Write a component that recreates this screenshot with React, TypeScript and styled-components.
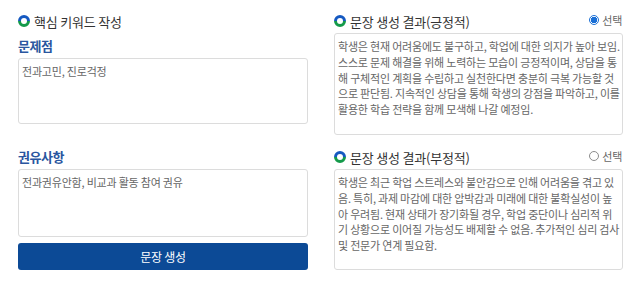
import React from 'react';
import styled, { createGlobalStyle } from 'styled-components';

const GlobalStyle = createGlobalStyle`
  body {
    margin: 0;
    background: #ffffff;
    font-family: "Noto Sans CJK KR", "Noto Sans", sans-serif;
  }
`;

const Page = styled.div`
  display: grid;
  grid-template-columns: 290px 289px;
  grid-template-rows: 126px 125px;
  column-gap: 26px;
  row-gap: 10px;
  padding: 9px 17px 0 18px;
  width: 640px;
  box-sizing: border-box;
`;

const Cell = styled.section`
  display: flex;
  flex-direction: column;
  min-height: 0;
`;

const Header = styled.div`
  display: flex;
  align-items: center;
  justify-content: space-between;
  height: 24px;
  flex: none;
`;

const TitleWrap = styled.div`
  display: flex;
  align-items: center;
  gap: 4px;
`;

const Title = styled.h2`
  margin: 0;
  font-size: 13px;
  font-weight: 400;
  letter-spacing: -0.2px;
  color: #333333;
`;

const Label = styled.h3<{ $h: number }>`
  margin: 0;
  height: ${({ $h }) => $h}px;
  line-height: ${({ $h }) => $h}px;
  font-size: 13px;
  font-weight: 700;
  letter-spacing: -0.5px;
  color: #2a569f;
  flex: none;
`;

const Box = styled.textarea<{ $h?: number }>`
  display: block;
  box-sizing: border-box;
  width: 100%;
  height: ${({ $h }) => ($h ? `${$h}px` : 'auto')};
  flex: ${({ $h }) => ($h ? 'none' : '1')};
  margin: 0;
  padding: 5px 1px 5px 3px;
  border: 1px solid #dcdcdc;
  border-radius: 3px;
  resize: none;
  outline: none;
  overflow: hidden;
  word-break: break-all;
  font-family: "Noto Sans CJK KR", "Noto Sans", sans-serif;
  font-size: 11px;
  line-height: 15.8px;
  letter-spacing: -0.2px;
  color: #666666;
  background: #ffffff;
`;

const Button = styled.button`
  margin-top: 6px;
  height: 27px;
  flex: none;
  border: none;
  border-radius: 3px;
  background: #0c4a96;
  color: #ffffff;
  font-family: "Noto Sans CJK KR", "Noto Sans", sans-serif;
  font-size: 12px;
  letter-spacing: -0.3px;
  cursor: pointer;
`;

const Choice = styled.label`
  display: flex;
  align-items: center;
  gap: 3px;
  font-size: 11px;
  color: #666666;
  letter-spacing: -0.3px;
  margin-top: -2px;
  margin-right: 1px;
`;

const RadioDot = styled.span<{ $on: boolean }>`
  width: 10px;
  height: 10px;
  box-sizing: border-box;
  border-radius: 50%;
  border: 1px solid ${({ $on }) => ($on ? '#1a6fd6' : '#8c8c8c')};
  background: ${({ $on }) => ($on ? 'radial-gradient(circle, #1a6fd6 0 3px, #ffffff 3.2px)' : '#ffffff')};
`;

const RingIcon = () => (
  <svg width="12" height="12" viewBox="0 0 12 12">
    <path d="M1.5 6 A4.5 4.5 0 0 1 10.5 6" fill="none" stroke="#1559c1" strokeWidth="3" />
    <path d="M10.5 6 A4.5 4.5 0 0 1 1.5 6" fill="none" stroke="#149a4a" strokeWidth="3" />
  </svg>
);

const Radio = ({ on }: { on: boolean }) => (
  <Choice>
    <RadioDot $on={on} />
    선택
  </Choice>
);

const positive =
  '학생은 현재 어려움에도 불구하고, 학업에 대한 의지가 높아 보임. 스스로 문제 해결을 위해 노력하는 모습이 긍정적이며, 상담을 통해 구체적인 계획을 수립하고 실천한다면 충분히 극복 가능할 것으로 판단됨. 지속적인 상담을 통해 학생의 강점을 파악하고, 이를 활용한 학습 전략을 함께 모색해 나갈 예정임.';

const negative =
  '학생은 최근 학업 스트레스와 불안감으로 인해 어려움을 겪고 있음. 특히, 과제 마감에 대한 압박감과 미래에 대한 불확실성이 높아 우려됨. 현재 상태가 장기화될 경우, 학업 중단이나 심리적 위기 상황으로 이어질 가능성도 배제할 수 없음. 추가적인 심리 검사 및 전문가 연계 필요함.';

export default function App() {
  return (
    <>
      <GlobalStyle />
      <Page>
        <Cell>
          <Header>
            <TitleWrap>
              <RingIcon />
              <Title>핵심 키워드 작성</Title>
            </TitleWrap>
          </Header>
          <Label $h={25}>문제점</Label>
          <Box $h={66} readOnly defaultValue="전과고민, 진로걱정" />
        </Cell>
        <Cell>
          <Header>
            <TitleWrap>
              <RingIcon />
              <Title>문장 생성 결과(긍정적)</Title>
            </TitleWrap>
            <Radio on />
          </Header>
          <Box readOnly defaultValue={positive} />
        </Cell>
        <Cell>
          <Label $h={24}>권유사항</Label>
          <Box $h={68} readOnly defaultValue="전과권유안함, 비교과 활동 참여 권유" />
          <Button>문장 생성</Button>
        </Cell>
        <Cell>
          <Header>
            <TitleWrap>
              <RingIcon />
              <Title>문장 생성 결과(부정적)</Title>
            </TitleWrap>
            <Radio on={false} />
          </Header>
          <Box readOnly defaultValue={negative} />
        </Cell>
      </Page>
    </>
  );
}
